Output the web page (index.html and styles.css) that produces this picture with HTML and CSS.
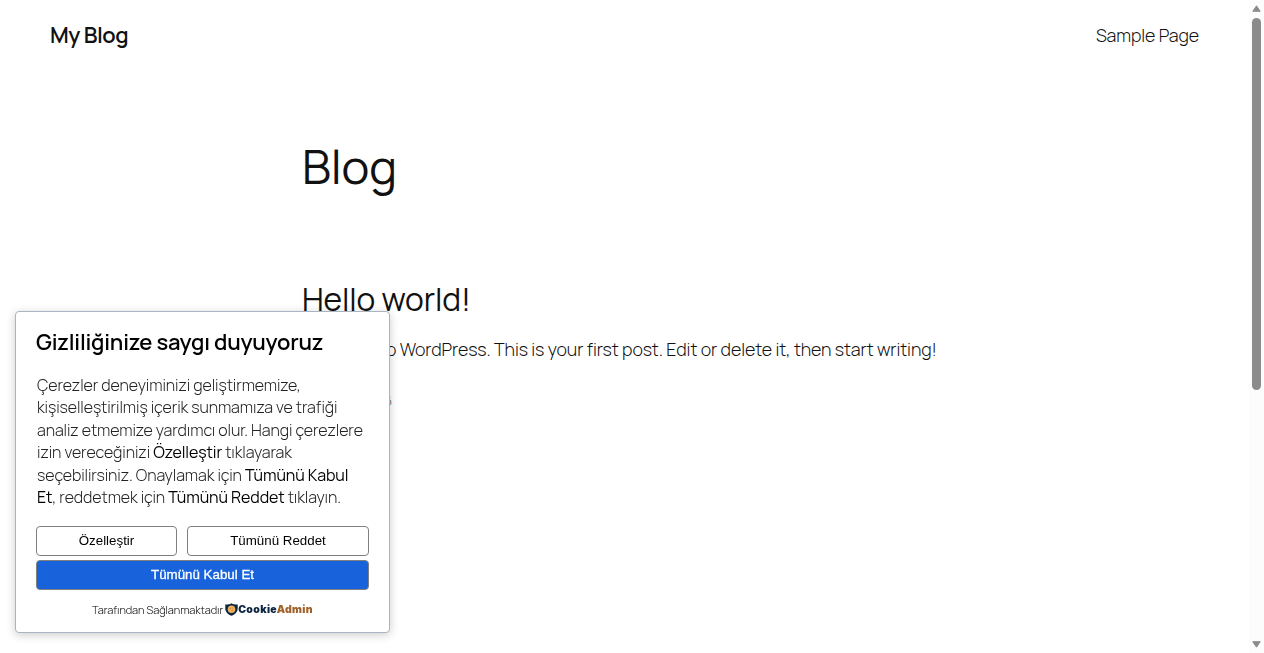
FILE: index.html
```html
<!DOCTYPE html>
<html lang="tr">
<head>
    <meta charset="UTF-8">
    <meta name="viewport" content="width=device-width, initial-scale=1.0">
    <title>My Blog</title>
    <link rel="stylesheet" href="styles.css">
</head>
<body>
    <div class="site">
        <header class="site-header">
            <a href="#" class="site-title">My Blog</a>
            <nav class="site-nav">
                <a href="#">Sample Page</a>
            </nav>
        </header>

        <main class="content">
            <h1 class="page-title">Blog</h1>
            <article class="post">
                <h2 class="post-title"><a href="#">Hello world!</a></h2>
                <p class="post-text">Welcome to WordPress. This is your first post. Edit or delete it, then start writing!</p>
                <time class="post-date">March 5, 2026</time>
            </article>
        </main>
    </div>

    <!-- Cookie consent -->
    <div class="cookie-box">
        <h3 class="cookie-title">Gizliliğinize saygı duyuyoruz</h3>
        <p class="cookie-text">
            Çerezler deneyiminizi geliştirmemize,<br>
            kişiselleştirilmiş içerik sunmamıza ve trafiği<br>
            analiz etmemize yardımcı olur. Hangi çerezlere<br>
            izin vereceğinizi <b>Özelleştir</b> tıklayarak<br>
            seçebilirsiniz. Onaylamak için <b>Tümünü Kabul</b><br>
            <b>Et</b>, reddetmek için <b>Tümünü Reddet</b> tıklayın.
        </p>
        <div class="cookie-buttons">
            <button class="btn btn-customize">Özelleştir</button>
            <button class="btn btn-reject">Tümünü Reddet</button>
            <button class="btn btn-accept">Tümünü Kabul Et</button>
        </div>
        <div class="powered">
            <span class="powered-label">Tarafından Sağlanmaktadır</span>
            <svg class="shield" width="13" height="13" viewBox="0 0 13 13">
                <path d="M6.5 0.2C8.6 1.5 10.5 1.6 12.7 1.5V5C12.7 9 10.4 11.4 6.5 12.8C2.6 11.4 0.3 9 0.3 5V1.5C2.5 1.6 4.4 1.5 6.5 0.2Z" fill="#0c2640"/>
                <circle cx="6.5" cy="6.2" r="3.8" fill="#f0b05c"/>
                <circle cx="5.2" cy="5.3" r="0.6" fill="#b26e26"/>
                <circle cx="7.8" cy="5" r="0.5" fill="#b26e26"/>
                <circle cx="7.2" cy="7.6" r="0.6" fill="#b26e26"/>
            </svg>
            <span class="brand">Cookie<span class="brand-admin">Admin</span></span>
        </div>
    </div>

    <div class="scrollbar">
        <svg width="9" height="7" viewBox="0 0 9 7"><path d="M4.5 0.8L8.2 6.3H0.8Z" fill="#8b8b8b" stroke="#8b8b8b" stroke-linejoin="round"/></svg>
        <div class="thumb"></div>
        <svg class="arrow-down" width="9" height="7" viewBox="0 0 9 7"><path d="M4.5 6.2L0.8 0.7H8.2Z" fill="#8b8b8b" stroke="#8b8b8b" stroke-linejoin="round"/></svg>
    </div>
</body>
</html>
```

FILE: styles.css
```css
* {
    margin: 0;
    padding: 0;
    box-sizing: border-box;
}

body {
    font-family: Manrope, Inter, 'Liberation Sans', sans-serif;
    font-weight: 300;
    letter-spacing: -0.1px;
    color: #111;
    background: #fff;
    height: 100vh;
    overflow: hidden;
}

a {
    color: inherit;
    text-decoration: none;
}

.site {
    padding: 0 65px 0 50px;
}

.site-header {
    display: flex;
    justify-content: space-between;
    align-items: center;
    height: 70px;
}

.site-title {
    font-size: 22px;
    font-weight: 600;
    letter-spacing: -0.5px;
}

.site-nav {
    font-size: 17.85px;
}

.content {
    width: 645px;
    margin: 66px auto 0;
    white-space: nowrap;
}

.page-title {
    font-size: 47px;
    font-weight: 400;
    line-height: 60px;
}

.post {
    margin-top: 84px;
}

.post-title {
    font-size: 31.7px;
    font-weight: 400;
    line-height: 38px;
}

.post-text {
    margin-top: 18px;
    font-size: 17.85px;
    line-height: 26px;
}

.post-date {
    display: block;
    margin-top: 29px;
    font-size: 14px;
    line-height: 20px;
    letter-spacing: 0.03px;
    color: #686868;
}

.cookie-box {
    position: fixed;
    left: 15px;
    bottom: 20px;
    width: 375px;
    height: 322px;
    padding: 15px 20px;
    background: #fff;
    border: 1px solid #a8b4c2;
    border-radius: 4px;
    box-shadow: 0 2px 10px rgba(0, 0, 0, 0.2);
    color: #000;
}

.cookie-title {
    font-size: 22px;
    font-weight: 600;
    line-height: 30px;
    letter-spacing: -0.23px;
    white-space: nowrap;
}

.cookie-text {
    margin-top: 17px;
    padding-left: 1px;
    font-size: 16px;
    line-height: 22.4px;
    white-space: nowrap;
    color: #222;
}

.cookie-text b {
    font-weight: 400;
    color: #000;
}

.cookie-buttons {
    display: flex;
    flex-wrap: wrap;
    gap: 4px 10px;
    margin-top: 18px;
}

.btn {
    height: 30px;
    font-family: 'Liberation Sans', Arial, sans-serif;
    font-size: 13.33px;
    line-height: 26px;
    color: #000;
    background: #fff;
    border: 1px solid #808080;
    border-radius: 4px;
}

.btn-customize {
    width: 141px;
}

.btn-reject {
    width: 182px;
}

.btn-accept {
    width: 333px;
    color: #fff;
    background: #1863dc;
    -webkit-text-stroke: 0.3px #fff;
}

.powered {
    display: flex;
    justify-content: center;
    align-items: center;
    margin-top: 12px;
    height: 15px;
    white-space: nowrap;
}

.powered-label {
    font-size: 11px;
    letter-spacing: -0.06px;
    margin-right: 2px;
}

.brand {
    font-family: Inter, sans-serif;
    font-size: 10.5px;
    font-weight: 900;
    letter-spacing: 0.35px;
    color: #0c2640;
}

.brand-admin {
    color: #a1622a;
}

.scrollbar {
    position: fixed;
    top: 0;
    right: 0;
    width: 15px;
    height: 100vh;
    padding: 5px 0;
    display: flex;
    flex-direction: column;
    align-items: center;
    background: #fcfcfc;
}

.thumb {
    width: 9px;
    height: 372px;
    margin-top: 6px;
    border-radius: 5px;
    background: #8b8b8b;
}

.arrow-down {
    margin-top: auto;
}
```
